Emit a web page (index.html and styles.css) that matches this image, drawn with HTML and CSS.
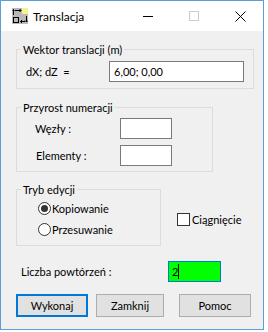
FILE: index.html
```html
<!DOCTYPE html>
<html lang="pl">
<head>
    <meta charset="UTF-8">
    <title>Translacja</title>
    <link rel="stylesheet" href="styles.css">
</head>
<body>

<div class="window">
    <div class="titlebar">
        <svg class="app-icon" width="16" height="16" viewBox="0 0 16 16">
            <rect x="0" y="0" width="16" height="16" fill="#b9b9b9"/>
            <rect x="10" y="0" width="6" height="6" fill="#f4f48a"/>
            <g stroke="#000" stroke-width="1" fill="none">
                <path d="M1.5 7V1.5M0.5 2.5L1.5 1.5L2.5 2.5"/>
                <path d="M3 2.5H9M7.5 1L9 2.5L7.5 4"/>
                <rect x="1.5" y="9.5" width="5" height="5"/>
                <path d="M14.5 8V14M13 12.5L14.5 14L16 12.5"/>
                <path d="M8.5 13.5H13M10 12L8.5 13.5L10 15"/>
            </g>
        </svg>
        <span class="title">Translacja</span>
        <div class="caption-buttons">
            <span class="cap">
                <svg width="10" height="10" viewBox="0 0 10 10"><path d="M0 5.5H10" stroke="#000" stroke-width="1"/></svg>
            </span>
            <span class="cap">
                <svg width="10" height="10" viewBox="0 0 10 10"><rect x="0.5" y="0.5" width="9" height="9" fill="none" stroke="#cccccc" stroke-width="1"/></svg>
            </span>
            <span class="cap">
                <svg width="11" height="11" viewBox="0 0 11 11"><path d="M0.5 0.5L10.5 10.5M10.5 0.5L0.5 10.5" stroke="#000" stroke-width="1"/></svg>
            </span>
        </div>
    </div>

    <div class="content">
        <fieldset class="group group-wektor">
            <legend>Wektor translacji (m)</legend>
            <div class="group-body">
                <div class="row">
                    <label class="lbl-dx">dX; dZ&nbsp; =</label>
                    <input class="edit edit-wide" type="text" value="6,00; 0,00">
                </div>
            </div>
        </fieldset>

        <fieldset class="group group-przyrost">
            <legend>Przyrost numeracji</legend>
            <div class="group-body">
                <div class="row">
                    <label class="lbl-num">Węzły :</label>
                    <input class="edit edit-small" type="text" value="">
                </div>
                <div class="row">
                    <label class="lbl-num lbl-elem">Elementy :</label>
                    <input class="edit edit-small" type="text" value="">
                </div>
            </div>
        </fieldset>

        <div class="tryb-row">
            <fieldset class="group group-tryb">
                <legend>Tryb edycji</legend>
                <div class="group-body">
                    <div class="radio-row">
                        <span class="radio checked"></span>
                        <span>Kopiowanie</span>
                    </div>
                    <div class="radio-row">
                        <span class="radio"></span>
                        <span>Przesuwanie</span>
                    </div>
                </div>
            </fieldset>
            <div class="check-row">
                <span class="checkbox"></span>
                <span>Ciągnięcie</span>
            </div>
        </div>

        <div class="row liczba-row">
            <label class="lbl-liczba">Liczba powtórzeń :</label>
            <div class="edit edit-green">2<span class="caret"></span></div>
        </div>

        <div class="buttons">
            <button class="btn btn-default">Wykonaj</button>
            <button class="btn btn-zamknij">Zamknij</button>
            <button class="btn btn-pomoc">Pomoc</button>
        </div>
    </div>
</div>

</body>
</html>
```

FILE: styles.css
```css
* {
    box-sizing: border-box;
}

body {
    margin: 0;
    background: #fff;
    font-family: Lato, "Noto Sans", sans-serif;
    font-size: 11px;
    line-height: 15px;
    color: #000;
}

.window {
    width: 264px;
    height: 330px;
    border: 1px solid #5f9bd8;
    background: #f0f0f0;
    display: flex;
    flex-direction: column;
}

/* pasek tytulu */
.titlebar {
    height: 30px;
    background: #fff;
    display: flex;
    align-items: center;
    flex-shrink: 0;
}

.app-icon {
    margin-left: 11px;
    display: block;
}

.title {
    margin-left: 5px;
    flex: 1;
    font-size: 12px;
}

.caption-buttons {
    display: flex;
    align-self: stretch;
}

.cap {
    width: 46px;
    display: flex;
    align-items: center;
    justify-content: center;
}

.cap svg {
    display: block;
}

/* zawartosc okna */
.content {
    padding: 11px 9px 0 15px;
}

.group {
    margin: 0;
    padding: 0;
    border: 1px solid #dcdcdc;
    min-width: 0;
}

.group legend {
    margin-left: 4px;
    padding: 0 2px;
}

.group-wektor .group-body {
    padding: 4px 9px 6px 9px;
}

.group-przyrost {
    width: 197px;
    margin-top: 11px;
}

.group-przyrost .group-body {
    padding: 3px 0 5px 18px;
}

.row {
    display: flex;
    align-items: center;
}

.group-przyrost .row + .row {
    margin-top: 6px;
}

.edit {
    height: 21px;
    border: 1px solid #7a7a7a;
    background: #fff;
    font: inherit;
    padding: 0 4px;
    margin: 0;
    outline: none;
}

.lbl-dx {
    width: 83px;
}

.edit-wide {
    width: 135px;
}

.lbl-num {
    width: 85px;
}

.lbl-elem {
    padding-left: 1px;
}

.edit-small {
    width: 52px;
}

/* tryb edycji + ciagniecie */
.tryb-row {
    display: flex;
    align-items: center;
    margin-top: 10px;
}

.group-tryb {
    width: 145px;
}

.group-tryb .group-body {
    padding: 1px 0 6px 21px;
}

.radio-row {
    display: flex;
    align-items: center;
    height: 20px;
    gap: 1px;
}

.radio-row + .radio-row {
    margin-top: 1px;
}

.radio {
    width: 13px;
    height: 13px;
    border: 1px solid #333;
    border-radius: 50%;
    background: #fff;
    display: flex;
    align-items: center;
    justify-content: center;
}

.radio.checked::after {
    content: "";
    width: 7px;
    height: 7px;
    border-radius: 50%;
    background: #333;
}

.check-row {
    display: flex;
    align-items: center;
    gap: 2px;
    margin-left: 16px;
    margin-top: 10px;
}

.checkbox {
    width: 13px;
    height: 13px;
    border: 1px solid #333;
    background: #fff;
}

/* liczba powtorzen */
.liczba-row {
    margin-top: 15px;
    padding-left: 5px;
}

.lbl-liczba {
    width: 147px;
}

.edit-green {
    width: 53px;
    background: #00ff00;
    border-color: #0078d7;
    display: flex;
    align-items: center;
    padding-left: 3px;
}

.caret {
    width: 1px;
    height: 15px;
    background: #000;
}

/* przyciski */
.buttons {
    display: flex;
    margin-top: 12px;
}

.btn {
    height: 23px;
    border: 1px solid #adadad;
    background: #e1e1e1;
    font: inherit;
    color: #000;
    padding: 0;
    margin: 0;
}

.btn-default {
    width: 72px;
    border: 2px solid #0078d7;
}

.btn-zamknij {
    width: 68px;
    margin-left: 8px;
}

.btn-pomoc {
    width: 72px;
    margin-left: 15px;
}
```
